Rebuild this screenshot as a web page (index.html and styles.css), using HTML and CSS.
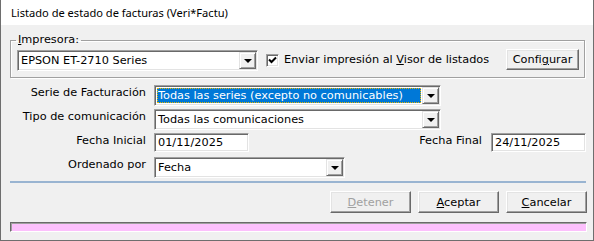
FILE: index.html
```html
<!DOCTYPE html>
<html lang="es">
<head>
  <meta charset="UTF-8">
  <title>Listado de estado de facturas</title>
  <link rel="stylesheet" href="styles.css">
</head>
<body>

<div class="window">
  <div class="title-bar">Listado de estado de facturas (Veri*Factu)</div>

  <div class="window-body">
    <fieldset class="group">
      <legend><u>I</u>mpresora:</legend>
      <div class="printer-row">
        <div class="combo printer-combo">
          <span class="combo-text">EPSON ET-2710 Series</span>
          <span class="combo-btn"><span class="arrow"></span></span>
        </div>
        <span class="checkbox">
          <svg width="9" height="9" viewBox="0 0 9 9"><path d="M1 3.5 L3.5 6 L8 1.5" fill="none" stroke="#000" stroke-width="2"/></svg>
        </span>
        <span class="check-label">Enviar impresión al <u>V</u>isor de listados</span>
        <button class="btn config-btn">Confi<u>g</u>urar</button>
      </div>
    </fieldset>

    <div class="form">
      <label class="lbl">Serie de Facturación</label>
      <div class="combo wide-combo">
        <span class="combo-text selected">Todas las series (excepto no comunicables)</span>
        <span class="combo-btn"><span class="arrow"></span></span>
      </div>

      <label class="lbl">Tipo de comunicación</label>
      <div class="combo wide-combo">
        <span class="combo-text">Todas las comunicaciones</span>
        <span class="combo-btn"><span class="arrow"></span></span>
      </div>

      <label class="lbl">Fecha Inicial</label>
      <div class="date-row">
        <span class="field">01/11/2025</span>
        <label class="lbl date-final">Fecha Final</label>
        <span class="field">24/11/2025</span>
      </div>

      <label class="lbl">Ordenado por</label>
      <div class="combo order-combo">
        <span class="combo-text">Fecha</span>
        <span class="combo-btn"><span class="arrow"></span></span>
      </div>
    </div>

    <div class="separator"></div>

    <div class="actions">
      <button class="btn" disabled><u>D</u>etener</button>
      <button class="btn"><u>A</u>ceptar</button>
      <button class="btn"><u>C</u>ancelar</button>
    </div>

    <div class="progress"></div>
  </div>
</div>

</body>
</html>
```

FILE: styles.css
```css
* {
  box-sizing: border-box;
}

html, body {
  margin: 0;
  padding: 0;
  width: 594px;
  height: 241px;
  background: #f0f0f0;
  font-family: "DejaVu Sans", sans-serif;
  font-size: 11.3px;
  color: #000;
}

.window {
  width: 594px;
  height: 241px;
  border: 1px solid #6e6e6e;
  border-top: none;
  background: #f0f0f0;
  display: flex;
  flex-direction: column;
}

.title-bar {
  height: 25px;
  background: #fff;
  font-family: "Noto Sans", sans-serif;
  font-size: 11.1px;
  line-height: 25px;
  padding-left: 10px;
  color: #000;
}

.window-body {
  flex: 1;
  padding: 8px 7px 0 9px;
  display: flex;
  flex-direction: column;
}

/* marco Impresora */
.group {
  margin: 0;
  padding: 3px 5px 6px 6px;
  border: 1px solid #a0a0a0;
  box-shadow: inset 1px 1px #fff, 1px 1px #fff;
  width: 575px;
}

.group legend {
  padding: 0 2px;
  margin-left: -1px;
  line-height: 14px;
}

.printer-row {
  display: flex;
  align-items: center;
}

/* combos */
.combo {
  height: 21px;
  background: #fff;
  border: 1px solid;
  border-color: #a0a0a0 #fff #fff #a0a0a0;
  box-shadow: inset 1px 1px #696969, inset -1px -1px #e3e3e3;
  padding: 1px;
  display: flex;
  align-items: stretch;
}

.combo-text {
  flex: 1;
  padding: 0 0 0 2px;
  line-height: 17px;
  white-space: nowrap;
  overflow: hidden;
}

.combo-text.selected {
  background: #0078d7;
  color: #fff;
  margin: 1px;
  padding-left: 1px;
  line-height: 15px;
  outline: 1px dotted #e8b800;
  outline-offset: -1px;
}

.combo-btn {
  width: 17px;
  background: #f0f0f0;
  border: 1px solid;
  border-color: #e3e3e3 #696969 #696969 #e3e3e3;
  box-shadow: inset 1px 1px #fff, inset -1px -1px #a0a0a0;
  display: flex;
  justify-content: center;
  align-items: center;
}

.arrow {
  width: 0;
  height: 0;
  border-left: 4px solid transparent;
  border-right: 4px solid transparent;
  border-top: 4px solid #000;
  margin-top: 1px;
}

.printer-combo {
  width: 241px;
}

.checkbox {
  width: 13px;
  height: 13px;
  margin-left: 8px;
  background: #fff;
  border: 1px solid;
  border-color: #a0a0a0 #fff #fff #a0a0a0;
  box-shadow: inset 1px 1px #696969, inset -1px -1px #e3e3e3;
  display: flex;
  justify-content: center;
  align-items: center;
}

.check-label {
  margin-left: 5px;
  padding-bottom: 2px;
}

/* botones */
.btn {
  font-family: "DejaVu Sans", sans-serif;
  font-size: 11.3px;
  color: #000;
  background: #f0f0f0;
  border: 1px solid;
  border-color: #fff #696969 #696969 #fff;
  box-shadow: inset -1px -1px #a0a0a0, inset 1px 1px #e3e3e3;
  padding: 0;
  width: 81px;
  height: 22px;
}

.btn:disabled {
  color: #a0a0a0;
}

.config-btn {
  margin-left: auto;
  width: 73px;
  height: 21px;
  margin-top: -2px;
}

/* formulario */
.form {
  margin-top: 7px;
  display: grid;
  grid-template-columns: 135px 1fr;
  column-gap: 8px;
  row-gap: 3px;
  grid-auto-rows: 21px;
  padding-left: 1px;
}

.lbl {
  text-align: right;
  line-height: 15px;
  white-space: nowrap;
}

.wide-combo {
  width: 287px;
}

.order-combo {
  width: 191px;
}

.date-row {
  display: flex;
  align-items: flex-start;
}

.field {
  width: 95px;
  height: 19px;
  background: #fff;
  border: 1px solid;
  border-color: #a0a0a0 #fff #fff #a0a0a0;
  box-shadow: inset 1px 1px #696969, inset -1px -1px #e3e3e3;
  padding: 0 3px;
  line-height: 18px;
}

.date-final {
  margin-left: auto;
  margin-right: 9px;
}

.separator {
  margin-top: 3px;
  height: 2px;
  width: 576px;
  background: #99b4d1;
}

.actions {
  margin-top: 8px;
  display: flex;
  justify-content: flex-end;
  gap: 7px;
  width: 577px;
}

.progress {
  margin-top: 9px;
  width: 577px;
  height: 10px;
  border: 1px solid;
  border-color: #696969 #fff #fff #696969;
  box-shadow: inset 1px 1px #a0a0a0;
  background: #fcc0fc;
}
```
